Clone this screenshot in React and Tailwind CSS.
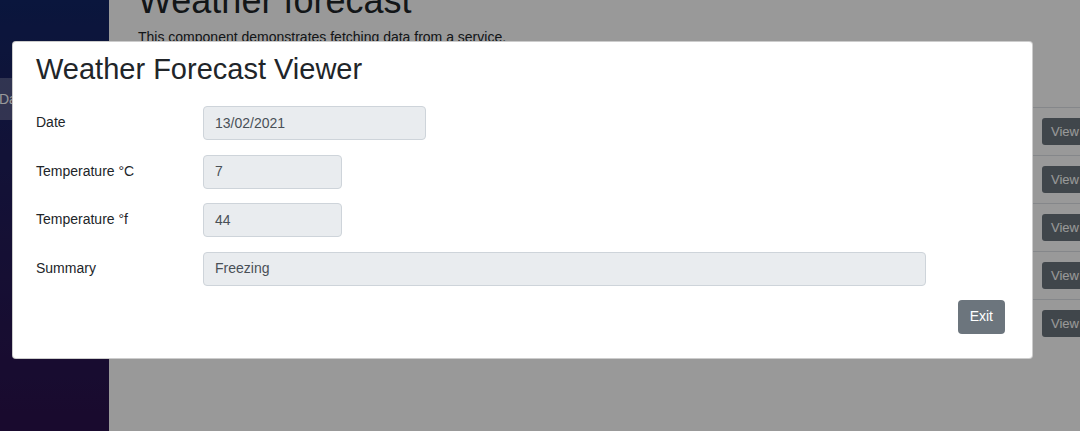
import React from 'react';

const forecasts = [
  { date: '13/02/2021', c: 7, f: 44, summary: 'Freezing' },
  { date: '14/02/2021', c: 21, f: 69, summary: 'Mild' },
  { date: '15/02/2021', c: -3, f: 27, summary: 'Chilly' },
  { date: '16/02/2021', c: 35, f: 94, summary: 'Hot' },
  { date: '17/02/2021', c: 12, f: 53, summary: 'Cool' },
];

const Field = ({ label, value, width }) => (
  <div className="flex items-center h-[34px]">
    <label className="w-[167px] text-[14px] text-[#212529] -mt-[1px]">{label}</label>
    <div
      className={`${width} h-[34px] flex items-center px-[11px] bg-[#e9ecef] border border-[#ced4da] rounded-[4px] text-[14px] text-[#495057]`}
    >
      {value}
    </div>
  </div>
);

const App = () => {
  const selected = forecasts[0];

  return (
    <div className="relative w-[1080px] h-[431px] overflow-hidden flex bg-white font-['Liberation_Sans',Arial,sans-serif]">
      {/* sidebar */}
      <div className="w-[109px] shrink-0 bg-gradient-to-b from-[#112566] to-[#2b114d] pt-[78px]">
        <div className="h-[42px] bg-white/25 flex items-center text-white text-[14px] -ml-[1px]">Data</div>
      </div>

      {/* page behind the dialog */}
      <div className="flex-1 pl-[29px] text-[#212529]">
        <h1 className="text-[36px] leading-[43px] -mt-[21px]">Weather forecast</h1>
        <p className="text-[14px] leading-[21px] mt-[5px]">This component demonstrates fetching data from a service.</p>
        <div className="mt-[11px] w-[1000px] text-[14px]">
          <div className="h-[48px]" />
          {forecasts.map((f) => (
            <div key={f.date} className="flex h-[48px] border-t border-[#dee2e6] pt-[10px]">
              <div className="w-[904px] flex">
                <div className="w-[220px] pl-3">{f.date}</div>
                <div className="w-[200px]">{f.c}</div>
                <div className="w-[200px]">{f.f}</div>
                <div className="w-[200px]">{f.summary}</div>
              </div>
              <button className="h-[27px] px-[9px] bg-[#6c757d] text-white text-[13px] rounded-[3px]">View</button>
            </div>
          ))}
        </div>
      </div>

      {/* backdrop */}
      <div className="absolute inset-0 bg-black/40" />

      {/* dialog */}
      <div className="absolute left-[12px] top-[41px] w-[1021px] h-[318px] bg-white border border-black/20 rounded-[4px] pl-[23px] pr-[27px] pt-[10px]">
        <h3 className="text-[29px] leading-[34px] text-[#212529]">Weather Forecast Viewer</h3>
        <div className="mt-[20px] flex flex-col gap-[14.67px]">
          <Field label="Date" value={selected.date} width="w-[223px]" />
          <Field label="Temperature °C" value={selected.c} width="w-[139px]" />
          <Field label="Temperature °f" value={selected.f} width="w-[139px]" />
          <Field label="Summary" value={selected.summary} width="w-[723px]" />
        </div>
        <div className="flex justify-end mt-[14px]">
          <button className="h-[34px] px-[12px] bg-[#6c757d] text-white text-[14px] rounded-[4px]">Exit</button>
        </div>
      </div>
    </div>
  );
};

export default App;
